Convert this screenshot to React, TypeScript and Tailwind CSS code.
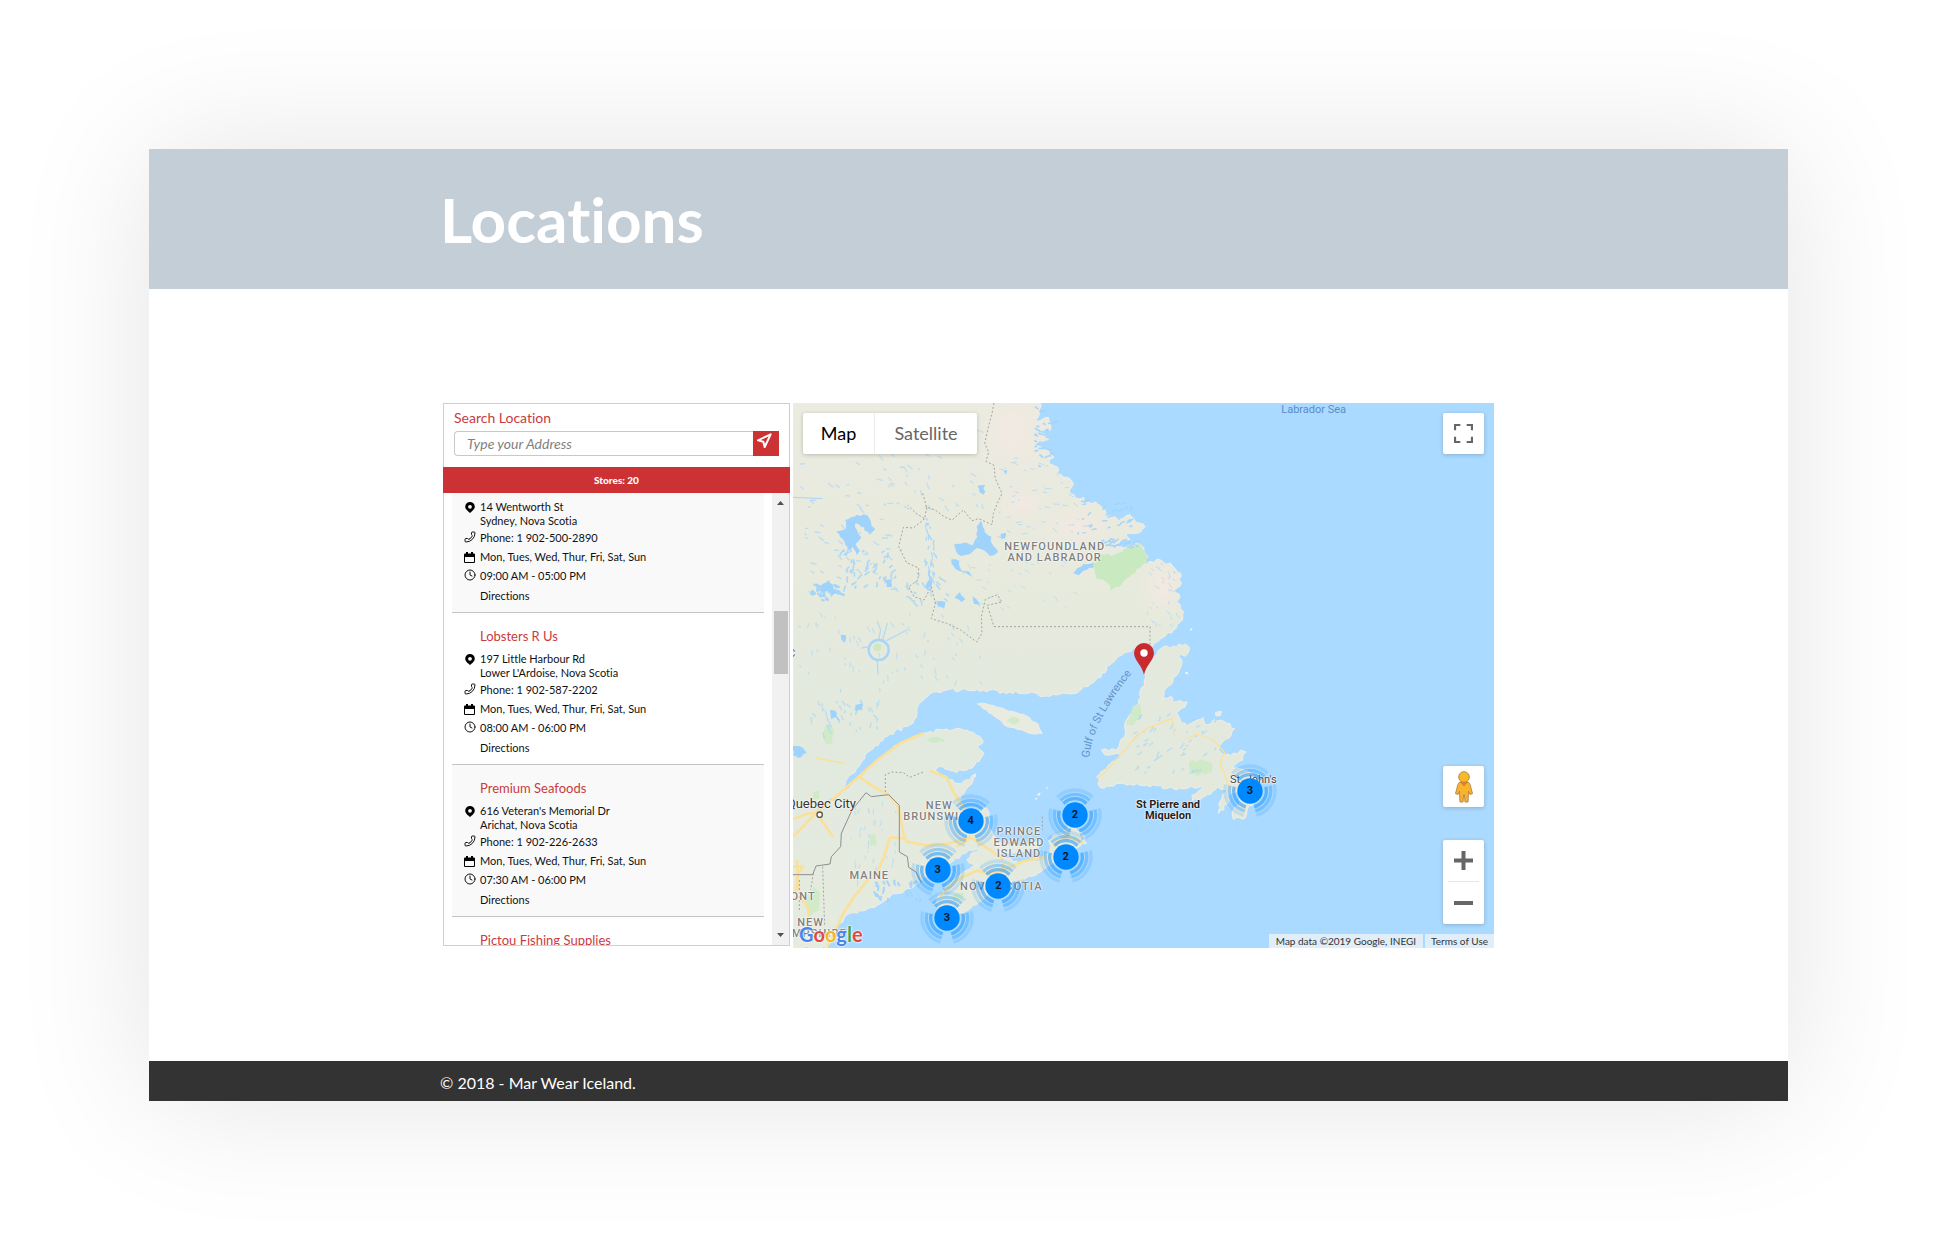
import React from "react";
import { Clock, Navigation, Phone } from "lucide-react";

/* ---------- terrain data: one map unit is a third of a pixel ---------- */

type Pt = [number, number];

const MAP_X = 9;
const MAP_Y = 9;
const MAP_W = 2103;
const MAP_H = 1635;

function seeded(seed: number) {
  let s = seed;
  return () => {
    s = (s * 1664525 + 1013904223) % 4294967296;
    return s / 4294967296;
  };
}

function parse(text: string): Pt[] {
  return text
    .trim()
    .split(/\s+/)
    .map((p) => p.split(",").map(Number) as Pt);
}

/* Breaks every stretch of coast up into small irregular steps. */
function coast(text: string, amount: number, seed: number): string {
  const rnd = seeded(seed);
  const pts = parse(text);
  const out: Pt[] = [];
  pts.forEach((p, i) => {
    const q = pts[(i + 1) % pts.length];
    out.push(p);
    const len = Math.hypot(q[0] - p[0], q[1] - p[1]);
    if (len > 300) return;
    const n = Math.floor(len / 9);
    for (let k = 1; k < n; k++) {
      const t = k / n;
      const d = (rnd() - 0.5) * 2 * amount;
      out.push([
        p[0] + (q[0] - p[0]) * t - ((q[1] - p[1]) / len) * d,
        p[1] + (q[1] - p[1]) * t + ((q[0] - p[0]) / len) * d,
      ]);
    }
  });
  return "M" + out.map((p) => `${p[0].toFixed(0)} ${p[1].toFixed(0)}`).join("L") + "Z";
}

const MAINLAND = `9,9 752,9 748,42 735,62 776,52 780,92 736,84 776,118 730,130 774,150 792,172 776,190 804,202
 800,222 834,232 850,252 838,270 856,294 882,292 876,310 916,306 945,330 944,350 1000,356 1020,344 1036,366
 1066,380 1052,396 1008,402 1020,418 966,432 1000,440 1046,428 1075,470 1060,496 1080,484 1112,480 1148,498
 1172,520 1172,556 1154,566 1170,592 1160,606 1180,634 1178,660 1150,690 1112,716 1080,742 1030,745 982,772
 950,800 946,818 900,852 868,874 770,888 742,882 640,876 560,869 470,870 428,877 392,906 372,960 358,976
 300,1002 240,1052 186,1122 154,1172 84,1222 92,1226 140,1196 206,1130 262,1080 330,1030 400,1000 450,989
 520,990 568,1008 580,1026 562,1036 582,1060 568,1084 536,1106 500,1118 458,1100 426,1110 470,1132 502,1150
 540,1140 556,1122 548,1146 522,1180 506,1204 510,1222 560,1240 590,1224 598,1240 594,1270 610,1304 616,1340
 650,1376 700,1388 752,1378 780,1358 776,1322 800,1300 842,1276 872,1296 890,1330 850,1346 812,1372 770,1404
 700,1440 650,1462 596,1480 560,1514 520,1540 486,1542 448,1530 440,1502 470,1456 520,1416 566,1396 536,1388
 530,1378 566,1346 530,1358 484,1388 440,1402 402,1432 386,1452 344,1472 300,1490 262,1516 230,1528 172,1544
 150,1570 124,1600 110,1644 9,1644`;

const NEWFOUNDLAND = `1186,732 1198,742 1192,762 1166,770 1176,790 1158,828 1134,860 1112,902 1142,888 1148,906
 1192,906 1184,922 1160,938 1170,958 1190,980 1214,964 1240,952 1246,972 1238,990 1272,958 1302,964 1334,986
 1324,1004 1298,1026 1286,1050 1302,1066 1342,1062 1352,1050 1368,1056 1358,1080 1328,1104 1352,1106 1390,1126
 1402,1168 1392,1206 1372,1228 1366,1254 1330,1258 1326,1242 1350,1204 1344,1172 1322,1180 1302,1230 1286,1240
 1290,1204 1312,1168 1282,1160 1262,1182 1208,1202 1206,1186 1240,1160 1150,1166 1100,1158 1050,1156 1000,1150
 930,1162 920,1130 960,1092 992,1070 986,1060 944,1064 934,1050 978,1050 1002,1012 1004,980 1032,930 1046,900
 1062,846 1066,810 1092,770 1112,746 1150,738`;

const ISLANDS = [
  "562,912 590,912 640,925 700,943 744,972 757,1000 730,1002 682,988 642,974 612,948 590,930",
  "604,1296 622,1326 660,1336 704,1338 748,1324 744,1344 690,1358 640,1356 616,1340",
  "1276,938 1294,934 1292,946 1278,948",
];

const LAKES = [
  "138,396 168,388 166,360 200,344 232,346 244,376 256,388 238,404 222,382 196,370 204,400 214,412 196,432 210,452 200,466 188,440 172,452 164,426 150,410",
  "492,434 530,428 548,436 562,412 560,380 572,362 584,396 604,410 608,434 624,456 600,468 584,452 560,444 540,462 514,468 498,454",
  "484,478 508,482 510,504 542,522 550,536 520,516 496,506",
  "494,594 510,576 526,598 514,606",
  "548,588 566,606 570,620 552,612",
  "562,258 586,256 580,284 568,276",
  "850,520 880,492 912,488 908,504 880,512 866,526",
  "9,1038 36,1042 50,1060 26,1074 9,1066",
  "406,560 420,536 426,556 414,572",
  "440,604 466,606 462,626 444,620",
  "640,212 652,210 648,224",
  "632,402 648,398 644,416 632,414",
  "90,560 118,540 140,580 124,592 112,572 90,580",
  "286,540 300,538 306,560 290,562",
  "152,704 168,706 164,728 154,720",
  "196,916 220,912 218,930 200,934",
  "120,930 140,936 150,966 138,950 124,958",
];

/* Short strokes that stand for the many narrow lakes of the plateau. */
function pond(seed: number, count: number, box: [number, number, number, number], slope: number): string {
  const rnd = seeded(seed);
  let d = "";
  for (let i = 0; i < count; i++) {
    const x = box[0] + rnd() * box[2];
    const y = box[1] + rnd() * box[3];
    const l = 3 + rnd() * 15;
    const a = slope + (rnd() - 0.5) * 1.1;
    const bend = (rnd() - 0.5) * 9;
    d += `M${x.toFixed(0)} ${y.toFixed(0)}q${(Math.cos(a) * l * 0.5 + bend).toFixed(0)} ${(Math.sin(a) * l * 0.5).toFixed(0)} ${(Math.cos(a) * l).toFixed(0)} ${(Math.sin(a) * l).toFixed(0)}`;
  }
  return d;
}

const PONDS: { d: string; w: number; o: number }[] = [
  { d: pond(3, 60, [12, 180, 320, 420], 0.4), w: 4, o: 0.6 },
  { d: pond(11, 44, [150, 450, 170, 110], 2.1), w: 5, o: 0.8 },
  { d: pond(23, 20, [60, 540, 90, 60], 0.8), w: 7, o: 0.9 },
  { d: pond(31, 26, [405, 340, 28, 180], 1.5), w: 4, o: 0.8 },
  { d: pond(37, 24, [340, 520, 130, 90], 1), w: 5, o: 0.7 },
  { d: pond(41, 40, [260, 60, 330, 260], 0.9), w: 4, o: 0.5 },
  { d: pond(47, 50, [620, 170, 260, 240], 0.3), w: 3, o: 0.6 },
  { d: pond(53, 30, [500, 480, 380, 160], 0.6), w: 3, o: 0.5 },
  { d: pond(59, 60, [20, 640, 560, 210], 1.4), w: 4, o: 0.45 },
  { d: pond(61, 40, [60, 860, 220, 140], 1.2), w: 4, o: 0.6 },
  { d: pond(67, 30, [1070, 490, 95, 190], 0.9), w: 3, o: 0.6 },
  { d: pond(71, 46, [1040, 940, 240, 180], 2.3), w: 4, o: 0.6 },
  { d: pond(73, 40, [180, 1200, 140, 240], 1.7), w: 3, o: 0.6 },
  { d: pond(79, 22, [730, 20, 60, 180], 0.2), w: 5, o: 0.9 },
  { d: pond(83, 30, [860, 300, 170, 110], -0.5), w: 4, o: 0.9 },
  { d: pond(89, 26, [930, 415, 110, 30], -0.4), w: 5, o: 0.9 },
  { d: pond(97, 24, [240, 1440, 150, 60], 1.4), w: 6, o: 0.9 },
];

const PARKS = [
  "908,500 934,462 972,466 1002,448 1046,428 1062,452 1076,472 1056,496 1020,530 986,560 962,574 950,546 920,536",
  "1008,974 1030,916 1050,912 1054,950 1030,976",
  "1198,1084 1236,1078 1268,1094 1264,1118 1220,1128 1198,1110",
  "106,972 128,982 128,1030 108,1032 100,1000",
  "238,1304 254,1302 258,1336 240,1338",
  "410,1018 440,1010 466,1020 440,1028",
  "650,962 672,950 690,960 670,974",
  "44,1500 70,1460 92,1484 88,1530 60,1548",
  "492,1484 522,1478 516,1500 494,1504",
  "70,1178 88,1172 88,1196 72,1198",
];

const ROADS = [
  "M9 1310L80 1238L206 1130L250 1160L296 1184L326 1222L340 1300L350 1325L410 1336L480 1330L542 1312L600 1350L640 1378",
  "M80 1240L130 1312M9 1258L50 1242L80 1238",
  "M206 1130L262 1080L330 1030L400 1000",
  "M346 1316L300 1312L282 1370L262 1420L240 1432L194 1488L160 1540L112 1640",
  "M420 1112L470 1132L492 1180L520 1222L536 1260",
  "M9 1400L40 1400L24 1420L16 1480L54 1520L58 1560M20 1380L26 1470",
  "M450 1490L500 1440L560 1412L600 1420L640 1410L700 1384L770 1370",
  "M542 1312L500 1340M640 1392L632 1440",
  "M790 1340L830 1306L880 1330",
  "M926 1134L982 1076L1036 1012L1070 986L1130 962L1148 956L1152 1010",
  "M1190 1016L1222 1002L1270 1020L1304 1058L1290 1090L1306 1130L1320 1170",
  "M80 1074L110 1080L166 1090",
];

const BORDERS = [
  "M612 9L606 40L594 86L584 130L596 156L588 184L612 196L616 236L636 280L622 310L610 340L606 374L566 356L546 362L520 330L486 360L462 350L436 330L410 322L398 280M410 322L404 356L378 340L354 316M404 356L370 384L340 382L326 440L350 488L386 504L384 540L356 560L372 590L402 600L424 560L436 610L424 656L470 670L512 690L560 726L576 700L574 650L586 598L622 584L636 606L592 616L612 680",
  "M612 680H1080V742",
  "M286 1176V1124L306 1116L340 1118L360 1132L400 1116",
  "M98 1400L104 1580M70 1420L62 1470M757 1250V1290M28 1440V1530",
];

const sectorArc = (r: number) => {
  const pt = (deg: number) => {
    const a = (deg * Math.PI) / 180;
    return `${(Math.cos(a) * r).toFixed(1)} ${(Math.sin(a) * r).toFixed(1)}`;
  };
  return [-90, 30, 150].map((m) => `M${pt(m - 45)}A${r} ${r} 0 0 1 ${pt(m + 45)}`).join("");
};

const pctX = (x: number) => `${((x - MAP_X) / MAP_W) * 100}%`;
const pctY = (y: number) => `${((y - MAP_Y) / MAP_H) * 100}%`;

function Terrain() {
  return (
    <svg
      className="absolute inset-0 h-full w-full"
      viewBox={`${MAP_X} ${MAP_Y} ${MAP_W} ${MAP_H}`}
      preserveAspectRatio="none"
      aria-hidden="true"
    >
      <defs>
        <linearGradient id="land" x1="0" y1="0" x2="0" y2="1">
          <stop offset="0" stopColor="#ebebe0" />
          <stop offset="0.4" stopColor="#e6eadd" />
          <stop offset="0.65" stopColor="#e2e9de" />
          <stop offset="1" stopColor="#e6ebdf" />
        </linearGradient>
        <radialGradient id="rock">
          <stop offset="0" stopColor="#f3e9e2" />
          <stop offset="1" stopColor="#f0e9e0" stopOpacity="0" />
        </radialGradient>
        <clipPath id="shore">
          <path d={coast(MAINLAND, 5, 5)} />
        </clipPath>
      </defs>
      <rect x={MAP_X} y={MAP_Y} width={MAP_W} height={MAP_H} fill="#aadaff" />
      <g fill="url(#land)" stroke="#f2ede2" strokeWidth="3">
        <path d={coast(MAINLAND, 5, 5)} />
        <path d={coast(NEWFOUNDLAND, 5, 9)} fill="#e4e9dd" />
        {ISLANDS.map((s, i) => (
          <path key={i} d={coast(s, 3, 20 + i)} fill="#e8ebdf" />
        ))}
      </g>
      <g clipPath="url(#shore)" fill="url(#rock)">
        <ellipse cx="670" cy="90" rx="120" ry="150" />
        <ellipse cx="700" cy="310" rx="80" ry="70" />
        <ellipse cx="860" cy="380" rx="130" ry="70" />
        <ellipse cx="1120" cy="560" rx="90" ry="110" />
      </g>
      <g fill="#c9e9c0">
        {PARKS.map((s, i) => (
          <path key={i} d={coast(s, 4, 50 + i)} opacity={i === 0 ? 1 : 0.75} />
        ))}
      </g>
      <g fill="none" stroke="#9fd3fc" strokeLinecap="round">
        {PONDS.map((p, i) => (
          <path key={i} d={p.d} strokeWidth={p.w} opacity={p.o} />
        ))}
        <circle cx="266" cy="750" r="30" strokeWidth="7" opacity="0.9" />
        <path d="M266 718L272 690L262 664M278 720L292 670M290 722L320 706L350 690M236 740L216 744M262 784L264 822" strokeWidth="4" opacity="0.7" />
        <path d="M9 292L96 296M416 500L424 590M150 1184L84 1224" strokeWidth="3" opacity="0.9" />
      </g>
      <circle cx="262" cy="742" r="12" fill="#cfe8bf" />
      <g fill="#9fd3fc">
        {LAKES.map((s, i) => (
          <path key={i} d={coast(s, 4, 80 + i)} />
        ))}
      </g>
      <g fill="none" stroke="#fbe09a" strokeWidth="6" strokeLinejoin="round">
        {ROADS.map((d, i) => (
          <path key={i} d={d} strokeWidth={i > 8 ? 4 : 8} />
        ))}
      </g>
      <g fill="none" stroke="#a5a5a0" strokeWidth="3" strokeDasharray="6 6">
        {BORDERS.map((d, i) => (
          <path key={i} d={d} />
        ))}
      </g>
      <path
        d="M9 1424H68L78 1398L120 1392L124 1370L152 1340L154 1300L186 1230L228 1178L244 1190L296 1184L328 1216V1356L352 1370L356 1402L378 1416L394 1448"
        fill="none"
        stroke="#8f8f8c"
        strokeWidth="3"
      />
      <g fill="#f6f4ee">
        <path d="M740 1184l12-8-4 12zM734 1196l8-4-2 8zM766 1164l8-4-2 6zM552 1130l6-12-2 16zM1198 690l10-8-4 10zM1188 820l6-4v8zM1186 816h6v6h-6z" />
      </g>
      <circle cx="89" cy="1244" r="8" fill="#fff" stroke="#555" strokeWidth="4" />
    </svg>
  );
}

const REGION = "text-[11px] leading-[11px] font-medium tracking-widest text-[#80807c]";

const LABELS: { lines: string[]; x: number; y: number; cls: string }[] = [
  { lines: ["NEWFOUNDLAND", "AND LABRADOR"], x: 794, y: 457, cls: REGION },
  { lines: ["NEW", "BRUNSWICK"], x: 448, y: 1232, cls: REGION },
  { lines: ["PRINCE", "EDWARD", "ISLAND"], x: 687, y: 1327, cls: REGION },
  { lines: ["MAINE"], x: 238, y: 1426, cls: REGION },
  { lines: ["NOVA SCOTIA"], x: 634, y: 1457, cls: REGION },
  { lines: ["VERMONT"], x: -12, y: 1488, cls: REGION },
  { lines: ["NEW", "HAMPSHIRE"], x: 62, y: 1583, cls: REGION },
  { lines: ["Quebec City"], x: 94, y: 1211, cls: "text-[13px] leading-3 text-[#333]" },
  { lines: ["QUEBEC"], x: -52, y: 758, cls: REGION },
  { lines: ["St. John's"], x: 1390, y: 1139, cls: "text-[11px] leading-3 text-[#444]" },
  { lines: ["St Pierre and", "Miquelon"], x: 1134, y: 1229, cls: "text-[11px] leading-[11px] font-bold text-[#222]" },
];

const CLUSTERS = [
  { count: 4, x: 542, y: 1262 },
  { count: 2, x: 855, y: 1246 },
  { count: 2, x: 827, y: 1370 },
  { count: 3, x: 443, y: 1410 },
  { count: 2, x: 625, y: 1457 },
  { count: 3, x: 471, y: 1555 },
  { count: 3, x: 1380, y: 1172 },
];

function Cluster({ count, x, y }: { count: number; x: number; y: number }) {
  return (
    <button
      type="button"
      aria-label={`${count} stores`}
      className="absolute flex size-14 -translate-x-1/2 -translate-y-1/2 items-center justify-center"
      style={{ left: pctX(x), top: pctY(y) }}
    >
      <svg className="absolute inset-0 size-14" viewBox="-84 -84 168 168" aria-hidden="true">
        <g fill="none" stroke="#0a8cff" strokeWidth="10">
          <path d={sectorArc(49)} opacity="0.5" />
          <path d={sectorArc(62)} opacity="0.33" />
          <path d={sectorArc(75)} opacity="0.15" />
        </g>
        <circle r="38" fill="#0088ff" />
      </svg>
      <span className="relative font-['Roboto',sans-serif] text-[11px] leading-3 font-bold text-[#0b1a2b]">{count}</span>
    </button>
  );
}

function Pegman() {
  return (
    <svg width="20" height="32" viewBox="0 0 20 32" aria-hidden="true">
      <path
        d="M6 11Q10 9.500 14 11C16 12 16.500 15 17.500 19L18.500 22.500L16 23.500L14.500 20L14 31H11L10.500 24H9.500L9 31H6L5.500 20L4 23.500L1.500 22.500L2.500 19C3.500 15 4 12 6 11Z"
        fill="#f9b32d"
        stroke="#b98a4a"
        strokeWidth="1"
        strokeLinejoin="round"
      />
      <path d="M6 11L10 15.500L14 11Z" fill="#e57b22" />
      <circle cx="10" cy="6" r="5.300" fill="#fbb829" stroke="#b98a4a" strokeWidth="1" />
    </svg>
  );
}

function MapPane() {
  return (
    <section
      aria-label="Store map"
      className="relative h-[545px] min-w-0 flex-1 overflow-hidden bg-[#aadaff] font-['Roboto',sans-serif]"
    >
      <Terrain />

      {LABELS.map((l) => (
        <div
          key={l.lines.join(" ")}
          className={`absolute -translate-x-1/2 -translate-y-1/2 text-center whitespace-nowrap [text-shadow:0_0_2px_#fff,0_0_2px_#fff,0_0_1px_#fff] ${l.cls}`}
          style={{ left: pctX(l.x), top: pctY(l.y) }}
        >
          {l.lines.map((t) => (
            <div key={t}>{t}</div>
          ))}
        </div>
      ))}
      <div
        className="absolute -translate-x-1/2 -translate-y-1/2 text-[11px] leading-3 whitespace-nowrap text-[#5b8cc9]"
        style={{ left: pctX(1571), top: pctY(31) }}
      >
        Labrador Sea
      </div>
      <svg className="absolute inset-0 h-full w-full" viewBox="0 0 701 545" aria-hidden="true">
        <path id="gulf" d="M296 355Q300 318 342 266" fill="none" />
        <text className="fill-[#6493c9] text-[11px]">
          <textPath href="#gulf">Gulf of St Lawrence</textPath>
        </text>
      </svg>

      {CLUSTERS.map((c) => (
        <Cluster key={`${c.x}-${c.y}`} {...c} />
      ))}
      <button
        type="button"
        aria-label="Your location"
        className="absolute -translate-x-1/2 -translate-y-full"
        style={{ left: pctX(1061), top: pctY(824) }}
      >
        <svg width="20" height="32" viewBox="0 0 20 32" className="block" aria-hidden="true">
          <path d="M10 0A10 10 0 0 1 20 10C20 17 12 22 10 32C8 22 0 17 0 10A10 10 0 0 1 10 0Z" fill="#c92a2d" />
          <circle cx="10" cy="10" r="3.700" fill="#fff" />
        </svg>
      </button>

      <div className="absolute top-2.5 left-2.5 flex h-[41px] rounded-xs bg-white font-['Lato',sans-serif] text-lg shadow-[0_1px_4px_rgba(0,0,0,0.2)]">
        <button type="button" className="w-[72px] border-r border-[#ebebeb] pb-0.5 text-black">
          Map
        </button>
        <button type="button" className="w-[102px] pb-0.5 text-[#666]">
          Satellite
        </button>
      </div>

      <button
        type="button"
        aria-label="Toggle fullscreen"
        className="absolute top-2.5 right-2.5 flex size-[41px] items-center justify-center rounded-xs bg-white shadow-[0_1px_4px_rgba(0,0,0,0.2)]"
      >
        <svg width="19" height="19" viewBox="0 0 18 18" aria-hidden="true">
          <path d="M0 0v6h2V2h4V0H0zm16 0h-4v2h4v4h2V0h-2zm0 16h-4v2h6v-6h-2v4zM2 12H0v6h6v-2H2v-4z" fill="#666" />
        </svg>
      </button>

      <div className="absolute right-2.5 bottom-6 flex w-[41px] flex-col gap-[33px]">
        <button
          type="button"
          aria-label="Drag Pegman onto the map to open Street View"
          className="flex h-[41px] items-center justify-center rounded-xs bg-white shadow-[0_1px_4px_rgba(0,0,0,0.2)]"
        >
          <Pegman />
        </button>
        <div className="flex flex-col items-center rounded-xs bg-white shadow-[0_1px_4px_rgba(0,0,0,0.2)]">
          <button type="button" aria-label="Zoom in" className="flex h-[41px] w-full items-center justify-center">
            <svg width="19" height="19" viewBox="0 0 19 19" aria-hidden="true">
              <path d="M0 7.500H7.500V0H11.500V7.500H19V11.500H11.500V19H7.500V11.500H0Z" fill="#666" />
            </svg>
          </button>
          <div className="h-px w-[31px] bg-[#e6e6e6]" />
          <button type="button" aria-label="Zoom out" className="flex h-[42px] w-full items-center justify-center">
            <svg width="19" height="4" viewBox="0 0 19 4" aria-hidden="true">
              <path d="M0 0H19V4H0Z" fill="#666" />
            </svg>
          </button>
        </div>
      </div>

      <a
        href="#google"
        aria-label="Google"
        className="absolute bottom-0.5 left-1.5 font-['Lato',sans-serif] text-[20px] leading-6 font-bold [text-shadow:0_0_2px_#fff,0_0_2px_#fff,0_0_1px_#fff]"
      >
        <span className="text-[#4a86e8]">G</span>
        <span className="text-[#dd4b3e]">o</span>
        <span className="text-[#f4b821]">o</span>
        <span className="text-[#4a86e8]">g</span>
        <span className="text-[#3da557]">l</span>
        <span className="text-[#dd4b3e]">e</span>
      </a>

      <div className="absolute right-0 bottom-0 flex gap-0.5 font-['Lato',sans-serif] text-[10px] leading-3.5 whitespace-nowrap text-[#333]">
        <span className="bg-[#e4eff8]/90 px-[7px]">Map data ©2019 Google, INEGI</span>
        <a href="#terms" className="bg-[#e4eff8]/90 px-1.5">
          Terms of Use
        </a>
      </div>
    </section>
  );
}

/* ---------- store list ---------- */

type Store = { name: string; street: string; city: string; phone: string; hours: string };

const STORES: Store[] = [
  { name: "", street: "14 Wentworth St", city: "Sydney, Nova Scotia", phone: "1 902-500-2890", hours: "09:00 AM - 05:00 PM" },
  { name: "Lobsters R Us", street: "197 Little Harbour Rd", city: "Lower L'Ardoise, Nova Scotia", phone: "1 902-587-2202", hours: "08:00 AM - 06:00 PM" },
  { name: "Premium Seafoods", street: "616 Veteran's Memorial Dr", city: "Arichat, Nova Scotia", phone: "1 902-226-2633", hours: "07:30 AM - 06:00 PM" },
];

function PinIcon() {
  return (
    <svg width="10" height="11" viewBox="0 0 10 11" className="mt-0.5 ml-px" aria-hidden="true">
      <path fillRule="evenodd" d="M5 0A4.800 4.800 0 0 1 9.800 4.700C9.800 7.500 6.500 9.500 5 11C3.500 9.500 .2 7.500 .2 4.700A4.800 4.800 0 0 1 5 0ZM5 2.900A1.900 1.900 0 1 0 5 6.700A1.900 1.900 0 1 0 5 2.900Z" />
    </svg>
  );
}

function CalendarIcon() {
  return (
    <svg width="11" height="11" viewBox="0 0 11 11" aria-hidden="true">
      <path fillRule="evenodd" d="M2 0H4V1.500H7V0H9V1.500H10Q11 1.500 11 2.500V10Q11 11 10 11H1Q0 11 0 10V2.500Q0 1.500 1 1.500H2ZM1 5V10H10V5Z" />
    </svg>
  );
}

function StoreCard({ store }: { store: Store }) {
  return (
    <li
      className={
        store.name === ""
          ? "border-b border-[#c4c4c4] bg-[#f9f9f9] pt-[7px] pb-[7px]"
          : "border-b border-[#c4c4c4] pt-3.5 pb-[7px] odd:bg-[#f9f9f9]"
      }
    >
      {store.name !== "" && <h3 className="mb-[7px] pl-7 text-[13px] leading-[18px] text-[#c83c40]">{store.name}</h3>}
      <div className="grid grid-cols-[12px_1fr] gap-x-1 gap-y-px pl-3 text-[11px] leading-[18px]">
        <PinIcon />
        <address className="leading-3.5 not-italic">
          {store.street}
          <br />
          {store.city}
        </address>
        <Phone className="mt-0.5 size-3 -scale-x-100" strokeWidth={2} aria-hidden="true" />
        <span>Phone: {store.phone}</span>
        <span className="pt-1">
          <CalendarIcon />
        </span>
        <span>Mon, Tues, Wed, Thur, Fri, Sat, Sun</span>
        <Clock className="mt-0.5 size-3" strokeWidth={2} aria-hidden="true" />
        <span>{store.hours}</span>
      </div>
      <a href="#directions" className="mt-0.5 ml-7 block w-fit text-[11px] leading-[18px]">
        Directions
      </a>
    </li>
  );
}

function Sidebar() {
  return (
    <aside className="flex h-[543px] w-[347px] shrink-0 flex-col border border-[#cfcfcf] bg-white text-[#111]">
      <form className="px-2.5 pt-1 pb-[11px]" onSubmit={(e) => e.preventDefault()}>
        <label htmlFor="address" className="block pb-1 text-sm leading-[19px] text-[#c83c40]">
          Search Location
        </label>
        <div className="flex h-[25px]">
          <input
            id="address"
            type="text"
            placeholder="Type your Address"
            className="min-w-0 flex-1 rounded-l-sm border border-r-0 border-[#c8c8c8] px-3 text-sm italic placeholder:text-[#808080]"
          />
          <button type="submit" aria-label="Search" className="flex w-[26px] items-start justify-center bg-[#cc3233] pt-0.5 pr-1 text-white">
            <Navigation className="size-4" strokeWidth={3} aria-hidden="true" />
          </button>
        </div>
      </form>
      <p className="-mx-px bg-[#cc3233] text-center text-[10px] leading-[26px] font-black text-white">Stores: 20</p>
      <div className="flex min-h-0 flex-1">
        <ul className="min-w-0 flex-1 overflow-hidden pr-2 pl-2">
          {STORES.map((s) => (
            <StoreCard key={s.street} store={s} />
          ))}
          <li className="pt-3.5">
            <h3 className="pl-7 text-[13px] leading-[18px] text-[#c83c40]">Pictou Fishing Supplies</h3>
          </li>
        </ul>
        <div className="flex w-[17px] flex-col items-center bg-[#f1f1f1]">
          <button type="button" aria-label="Scroll up" className="flex h-5 items-center">
            <svg width="7" height="4" viewBox="0 0 7 4" aria-hidden="true">
              <path d="M0 4L3.500 0L7 4Z" fill="#505050" />
            </svg>
          </button>
          <div className="flex w-full flex-1 justify-center pt-[98px]">
            <div className="h-[63px] w-3.5 bg-[#c1c1c1]" />
          </div>
          <button type="button" aria-label="Scroll down" className="flex h-5 items-center">
            <svg width="7" height="4" viewBox="0 0 7 4" aria-hidden="true">
              <path d="M0 0L3.500 4L7 0Z" fill="#505050" />
            </svg>
          </button>
        </div>
      </div>
    </aside>
  );
}

export default function App() {
  return (
    <div className="min-h-screen bg-white p-[149px] font-['Lato',sans-serif] [font-variant-ligatures:none]">
      <div className="bg-white shadow-[0_0_130px_rgba(0,0,0,0.11)]">
        <header className="bg-[#c4ced7] py-8">
          <div className="mx-auto max-w-[1057px]">
            <h1 className="text-[62px] leading-[76px] font-bold text-white">Locations</h1>
          </div>
        </header>
        <main className="mx-auto flex max-w-[1057px] items-start gap-[3px] px-[3px] pt-[114px] pb-[113px]">
          <Sidebar />
          <MapPane />
        </main>
        <footer className="bg-[#333] pt-2.5 pb-1.5">
          <p className="mx-auto max-w-[1057px] text-base leading-6 text-white">© 2018 - Mar Wear Iceland.</p>
        </footer>
      </div>
    </div>
  );
}
